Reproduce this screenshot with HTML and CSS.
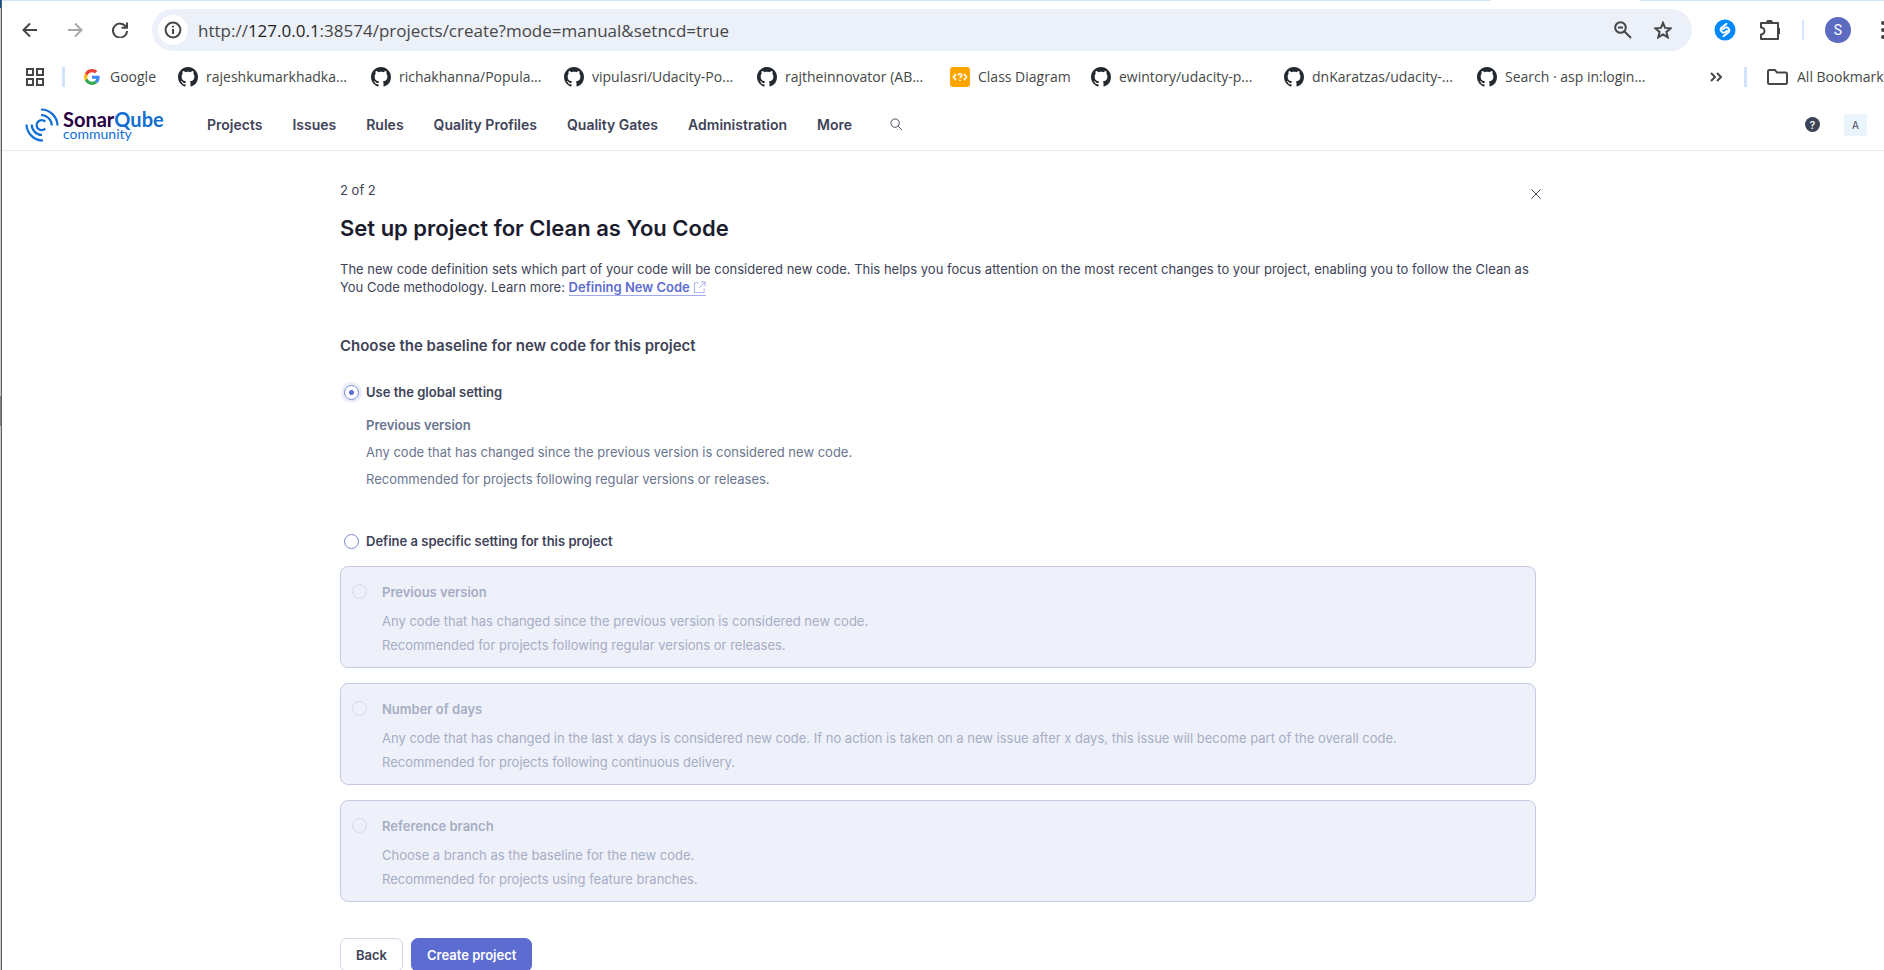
FILE: index.html
```html
<!DOCTYPE html>
<html lang="en">
<head>
<meta charset="utf-8">
<title>Set up project for Clean as You Code</title>
<link rel="stylesheet" href="styles.css">
</head>
<body>
<svg class="defs" aria-hidden="true">
  <symbol id="github" viewBox="0 0 16 16"><path fill="#24292f" d="M8 0C3.58 0 0 3.58 0 8c0 3.54 2.29 6.53 5.47 7.59.4.07.55-.17.55-.38 0-.19-.01-.82-.01-1.49-2.01.37-2.53-.49-2.69-.94-.09-.23-.48-.94-.82-1.13-.28-.15-.68-.52-.01-.53.63-.01 1.08.58 1.23.82.72 1.21 1.87.87 2.33.66.07-.52.28-.87.51-1.07-1.78-.2-3.64-.89-3.64-3.95 0-.87.31-1.59.82-2.15-.08-.2-.36-1.02.08-2.12 0 0 .67-.21 2.2.82.64-.18 1.32-.27 2-.27s1.36.09 2 .27c1.53-1.04 2.2-.82 2.2-.82.44 1.1.16 1.92.08 2.12.51.56.82 1.27.82 2.15 0 3.07-1.87 3.75-3.65 3.95.29.25.54.73.54 1.48 0 1.07-.01 1.93-.01 2.2 0 .21.15.46.55.38A8.01 8.01 0 0 0 16 8c0-4.42-3.58-8-8-8z"/></symbol>
</svg>
<div class="screen">
  <div class="edge" aria-hidden="true"><span class="edge-top"></span><span class="edge-thumb"></span></div>
  <div class="window">
    <div class="tabline" aria-hidden="true"><span></span></div>
    <div class="toolbar">
      <div class="history">
        <button type="button" aria-label="Back to previous page"><svg viewBox="0 0 16 16"><path d="M15 8H2M8 1.5L1.500 8L8 14.500"/></svg></button>
        <button type="button" class="dim" aria-label="Forward"><svg viewBox="0 0 16 16"><path d="M1 8H14M8 1.500L14.500 8L8 14.500"/></svg></button>
        <button type="button" aria-label="Reload"><svg viewBox="0 0 16 16"><path d="M14 5A7 7 0 1 0 15 9M15 0.500V5.800H9.500"/></svg></button>
      </div>
      <div class="omnibox">
        <button type="button" class="site-info" aria-label="Site information"><svg viewBox="0 0 18 18"><circle cx="9" cy="9" r="7.400"/><path d="M9 8V13M9 4.800V6.600"/></svg></button>
        <div class="url" role="textbox" aria-label="Address">http://<b>127.0.0.1</b>:38574/projects/create?mode=manual&amp;setncd=true</div>
        <button type="button" aria-label="Zoom"><svg viewBox="0 0 18 18"><circle cx="6.500" cy="6.500" r="5.300"/><path d="M10.500 10.500L17 17M4 6.500H9"/></svg></button>
        <button type="button" aria-label="Bookmark this page"><svg viewBox="0 0 18 18"><path d="M9 1.800L11.100 6.900L16.600 7.300L12.400 10.900L13.700 16.300L9 13.400L4.300 16.300L5.600 10.900L1.400 7.300L6.900 6.900Z"/></svg></button>
      </div>
      <div class="extensions">
        <button type="button" class="shazam" aria-label="Shazam"><svg viewBox="0 0 22 22"><circle cx="11" cy="11" r="10.500" fill="#0088ff" stroke="none"/><path d="M12.500 4.800L8 8.300A2.900 2.900 0 0 0 11.500 13L13 11.800M9.500 17.200L14 13.700A2.900 2.900 0 0 0 10.500 9L9 10.200" stroke="#fff" stroke-linecap="round"/></svg></button>
        <button type="button" class="puzzle" aria-label="Extensions"><svg viewBox="0 0 20 20"><path d="M1 3H18V19H1V14.500A3.500 3.500 0 0 0 1 7.500Z" stroke-linejoin="round"/><path d="M7 3A2.500 2.500 0 0 1 12 3ZM18 8.500A2.500 2.500 0 0 1 18 13.500Z" fill="#444"/></svg></button>
        <span class="divider"></span>
        <button type="button" class="profile">S</button>
        <button type="button" class="menu" aria-label="Menu"><svg viewBox="0 0 4 18"><g fill="#444" stroke="none"><circle cx="2" cy="2" r="2"/><circle cx="2" cy="9" r="2"/><circle cx="2" cy="16" r="2"/></g></svg></button>
      </div>
    </div>
    <div class="bookmarks">
      <button type="button" class="apps" aria-label="Apps"><svg viewBox="0 0 18 18"><path d="M1 1H7V7H1ZM11 1H17V7H11ZM1 11H7V17H1ZM11 11H17V17H11Z"/></svg></button>
      <span class="divider"></span>
      <a class="bookmark google" href="#"><svg viewBox="0 0 48 48"><path fill="#ea4335" d="M24 9.500c3.540 0 6.710 1.220 9.210 3.600l6.850-6.850C35.900 2.380 30.470 0 24 0 14.620 0 6.510 5.380 2.560 13.220l7.980 6.190C12.430 13.720 17.740 9.500 24 9.500z"/><path fill="#4285f4" d="M46.980 24.550c0-1.570-.15-3.090-.38-4.550H24v9.020h12.940c-.58 2.960-2.260 5.480-4.780 7.180l7.730 6c4.510-4.180 7.090-10.360 7.090-17.650z"/><path fill="#fbbc05" d="M10.530 28.590c-.48-1.450-.76-2.990-.76-4.590s.27-3.140.76-4.590l-7.980-6.190C.92 16.460 0 20.120 0 24s.92 7.540 2.560 10.780l7.970-6.190z"/><path fill="#34a853" d="M24 48c6.480 0 11.930-2.130 15.890-5.810l-7.730-6c-2.150 1.450-4.920 2.300-8.160 2.300-6.260 0-11.570-4.220-13.470-9.910l-7.980 6.190C6.510 42.620 14.620 48 24 48z"/></svg>Google</a>
      <a class="bookmark" href="#"><svg><use href="#github"/></svg>rajeshkumarkhadka...</a>
      <a class="bookmark" href="#"><svg><use href="#github"/></svg>richakhanna/Popula...</a>
      <a class="bookmark" href="#"><svg><use href="#github"/></svg>vipulasri/Udacity-Po...</a>
      <a class="bookmark" href="#"><svg><use href="#github"/></svg>rajtheinnovator (AB...</a>
      <a class="bookmark diagram" href="#"><svg viewBox="0 0 20 20"><rect width="20" height="20" rx="3" fill="#ffa500"/><path d="M6 7L3.500 10L6 13M14 7L16.500 10L14 13M8.300 8.300C8.500 6.300 11.700 6.300 11.700 8.300C11.700 9.700 10 9.600 10 11.200M10 12.800V14" fill="none" stroke="#fff" stroke-width="1.600"/></svg>Class Diagram</a>
      <a class="bookmark" href="#"><svg><use href="#github"/></svg>ewintory/udacity-p...</a>
      <a class="bookmark" href="#"><svg><use href="#github"/></svg>dnKaratzas/udacity-...</a>
      <a class="bookmark" href="#"><svg><use href="#github"/></svg>Search · asp in:login...</a>
      <div class="bookmarks-end">
        <button type="button" class="more-marks" aria-label="More bookmarks"><svg viewBox="0 0 12 10"><path d="M1 1L5 5L1 9M7 1L11 5L7 9"/></svg></button>
        <span class="divider"></span>
        <button type="button" class="all"><svg viewBox="0 0 21 16"><path d="M1 2.500Q1 1 2.500 1H8L10 3.500H18.500Q20 3.500 20 5V13.500Q20 15 18.500 15H2.500Q1 15 1 13.500Z"/></svg>All Bookmarks</button>
      </div>
    </div>

    <header class="appbar">
      <a class="brand" href="#" aria-label="SonarQube community">
        <svg viewBox="0 0 34 34"><g fill="none" stroke="#126ed3" stroke-width="2.200"><path d="M16 1.500A16.500 16.500 0 0 1 32.500 17.500M16 7A10.800 10.800 0 0 1 26.800 17.500M18 32.500A16.500 16.500 0 0 1 1.500 16.500M17 27A10.500 10.500 0 0 1 6.700 16.500"/><path d="M20.300 13.800A5 5 0 1 0 20.300 20.600"/></g></svg>
        <span class="brand-text"><span class="brand-name">Sonar<span>Qube</span></span><span class="brand-edition">community</span></span>
      </a>
      <nav class="nav">
        <a href="#">Projects</a><a href="#">Issues</a><a href="#">Rules</a><a href="#">Quality Profiles</a><a href="#">Quality Gates</a><a href="#">Administration</a><a href="#">More</a>
      </nav>
      <button type="button" class="search" aria-label="Search"><svg viewBox="0 0 14 14"><circle cx="5.500" cy="5.500" r="4.500"/><path d="M8.800 8.800L13 13"/></svg></button>
      <button type="button" class="help" aria-label="Help">?</button>
      <button type="button" class="account">A</button>
    </header>

    <main class="content">
      <div class="step"><span>2 of 2</span><button type="button" aria-label="Close"><svg viewBox="0 0 10 10"><path d="M0.500 0.500L9.500 9.500M9.500 0.500L0.500 9.500"/></svg></button></div>
      <h1>Set up project for Clean as You Code</h1>
      <p class="intro">The new code definition sets which part of your code will be considered new code. This helps you focus attention on the most recent changes to your project, enabling you to follow the Clean as You Code methodology. Learn more: <a href="#">Defining New Code <svg viewBox="0 0 14 14"><path d="M6 2H1.500V12.500H12V8M8.500 1H13V5.500M13 1L6.500 7.500"/></svg></a></p>
      <h2>Choose the baseline for new code for this project</h2>
      <label class="choice"><input type="radio" name="baseline" checked>Use the global setting</label>
      <div class="global">
        <strong>Previous version</strong>
        <p>Any code that has changed since the previous version is considered new code.</p>
        <p>Recommended for projects following regular versions or releases.</p>
      </div>
      <label class="choice"><input type="radio" name="baseline">Define a specific setting for this project</label>
      <div class="cards">
        <label class="card"><input type="radio" name="definition" disabled><span class="card-body"><strong>Previous version</strong><span>Any code that has changed since the previous version is considered new code.</span><span>Recommended for projects following regular versions or releases.</span></span></label>
        <label class="card"><input type="radio" name="definition" disabled><span class="card-body"><strong>Number of days</strong><span>Any code that has changed in the last x days is considered new code. If no action is taken on a new issue after x days, this issue will become part of the overall code.</span><span>Recommended for projects following continuous delivery.</span></span></label>
        <label class="card"><input type="radio" name="definition" disabled><span class="card-body"><strong>Reference branch</strong><span>Choose a branch as the baseline for the new code.</span><span>Recommended for projects using feature branches.</span></span></label>
      </div>
      <div class="actions"><button type="button" class="btn">Back</button><button type="button" class="btn primary">Create project</button></div>
    </main>
  </div>
</div>
</body>
</html>
```

FILE: styles.css
```css
* { box-sizing: border-box; }
body { margin: 0; background: #fff; color: #3e4357; font: 13px/20px Inter, "Liberation Sans", sans-serif; font-optical-sizing: none; }
button { display: flex; align-items: center; justify-content: center; margin: 0; padding: 0; border: 0; background: none; color: inherit; font: inherit; flex: none; }
a { color: inherit; text-decoration: none; }
h1, h2, p { margin: 0; }
button svg { fill: none; stroke: #444746; stroke-width: 2; }
.defs { display: none; }

.screen { display: flex; height: 100vh; overflow: hidden; }
.edge { display: flex; flex-direction: column; width: 2px; flex: none; background: #c8c8c8; border-right: 1px solid #606060; }
.edge-top { height: 8px; background: #0050a0; }
.edge-thumb { height: 30px; margin-top: 388px; background: #808080; }
.window { flex: 1; min-width: 0; overflow: hidden; }

.tabline { display: flex; justify-content: flex-end; height: 1px; padding-right: 244px; background: #d3e3fd; }
.tabline span { width: 149px; background: #fff; }

.toolbar { display: flex; align-items: center; height: 58px; padding-left: 20px; }
.history { display: flex; gap: 29px; width: 130px; }
.history svg { width: 16px; height: 16px; }
.history .dim svg { stroke: #a8a8a8; }
.omnibox { display: flex; align-items: center; gap: 22px; flex: 1; height: 42px; padding: 0 20px 0 6px; border-radius: 21px; background: #ecf0f9; }
.omnibox svg { width: 18px; height: 18px; }
.site-info { width: 30px; height: 30px; border-radius: 50%; background: #fff; }
.url { flex: 1; margin-left: -12px; padding-top: 1px; color: #474747; font: 17px/24px "Open Sans", sans-serif; white-space: nowrap; }
.url b { font-weight: 400; color: #1f1f1f; }
.extensions { display: flex; align-items: center; width: 192px; padding-left: 22px; overflow: hidden; }
.extensions svg { width: 20px; height: 20px; }
.extensions .shazam svg { width: 22px; height: 22px; }
.puzzle { margin-left: 24px; }
.divider { flex: none; width: 2px; height: 20px; background: #d3e3fd; }
.extensions .divider { margin: 0 21px 0 22px; }
.profile { width: 26px; height: 26px; border-radius: 50%; background: #5c6bc0; color: #fff; font: 14px/20px Roboto, sans-serif; }
.menu { margin-left: 30px; }
.extensions .menu svg { width: 4px; height: 18px; }

.bookmarks { display: flex; align-items: center; height: 36px; padding-left: 24px; color: #444746; font: 14px/20px "Open Sans", sans-serif; overflow: hidden; }
.apps svg { width: 18px; height: 18px; }
.bookmarks > .divider { width: 3px; margin: 0 19px 0 18px; }
.bookmark { display: flex; align-items: center; flex: none; gap: 8px; width: 193px; white-space: nowrap; }
.bookmark svg { width: 20px; height: 20px; flex: none; }
.google { width: 94px; gap: 10px; }
.google svg { width: 16px; height: 16px; }
.diagram { width: 141px; }
.bookmarks-end { display: flex; align-items: center; width: 174px; margin-left: auto; overflow: hidden; }
.more-marks svg { width: 12px; height: 10px; }
.bookmarks-end .divider { width: 3px; margin: 0 20px 0 22px; }
.all { gap: 9px; white-space: nowrap; }
.all svg { width: 21px; height: 16px; }

.appbar { display: flex; align-items: center; height: 56px; padding: 4px 17px 0 23px; border-bottom: 1px solid #ebebeb; }
.brand { display: flex; align-items: center; gap: 4px; width: 182px; }
.brand > svg { width: 34px; height: 34px; }
.brand-text { display: flex; flex-direction: column; color: #126ed3; font-family: Lato, sans-serif; }
.brand-name { color: #290042; font-size: 20px; line-height: 18px; font-weight: 700; }
.brand-name span { color: #126ed3; }
.brand-edition { font-size: 14px; line-height: 12px; }
.nav { display: flex; gap: 30px; font-size: 14px; font-weight: 600; }
.search { margin-left: 38px; }
.search svg { width: 13px; height: 13px; stroke: #3e4357; stroke-width: 1; }
.help { width: 15px; height: 15px; margin-left: auto; border-radius: 50%; background: #3e4357; color: #fff; font-size: 10px; font-weight: 600; }
.account { width: 23px; height: 22px; margin-left: 24px; border-radius: 3px; background: #e9f4fb; font-size: 10px; }

.content { margin: 0 348px 0 338px; padding-top: 29px; }
.step { display: flex; justify-content: space-between; align-items: flex-start; }
.step button { margin: 9px -5px 0 0; }
.step svg { width: 10px; height: 10px; stroke: #3e4357; stroke-width: 1; }
h1 { margin-top: 16px; color: #1b1d2e; font-size: 22px; line-height: 24px; font-weight: 600; }
.intro { margin: 20px -8px 0 0; line-height: 18px; }
.intro a { color: #5d6cd0; font-weight: 600; border-bottom: 1px solid #a1a9f0; }
.intro svg { width: 13px; height: 13px; vertical-align: -2px; fill: none; stroke: #a1a9f0; stroke-width: 1; }
h2 { margin-top: 40px; font-size: 15px; line-height: 20px; font-weight: 600; }
.choice { display: flex; align-items: center; gap: 7px; padding-left: 4px; font-weight: 600; }
h2 + .choice { margin-top: 26px; }
input[type="radio"] { appearance: none; flex: none; width: 15px; height: 15px; margin: 0; border: 1px solid #7b87d9; border-radius: 50%; background: #fff; }
input[type="radio"]:checked { background: radial-gradient(circle, #5d6cd0 2px, #fff 3px); box-shadow: 0 0 0 3px #ebedfb; }
.global { margin: 13px 0 42px 26px; color: #6a7590; }
.global p { margin-top: 7px; }
.cards { display: grid; gap: 15px; margin-top: 15px; }
.card { display: flex; gap: 15px; padding: 15px 12px 10px 11px; border: 1px solid #c5cae0; border-radius: 8px; background: #eef1fa; color: #a6adc4; }
.card input[type="radio"] { margin-top: 2px; border-color: #d5d9e8; background: transparent; }
.card-body { display: flex; flex-direction: column; line-height: 24px; }
.card-body strong, .global strong { font-weight: 600; }
.card-body strong { margin-bottom: 7px; line-height: 20px; }
.actions { display: flex; gap: 8px; margin-top: 36px; }
.btn { height: 34px; padding: 0 15px; border: 1px solid #d3d7e8; border-radius: 7px; background: #fff; font-weight: 600; }
.primary { border-color: #5d6cd0; background: #5d6cd0; color: #fff; }
```
